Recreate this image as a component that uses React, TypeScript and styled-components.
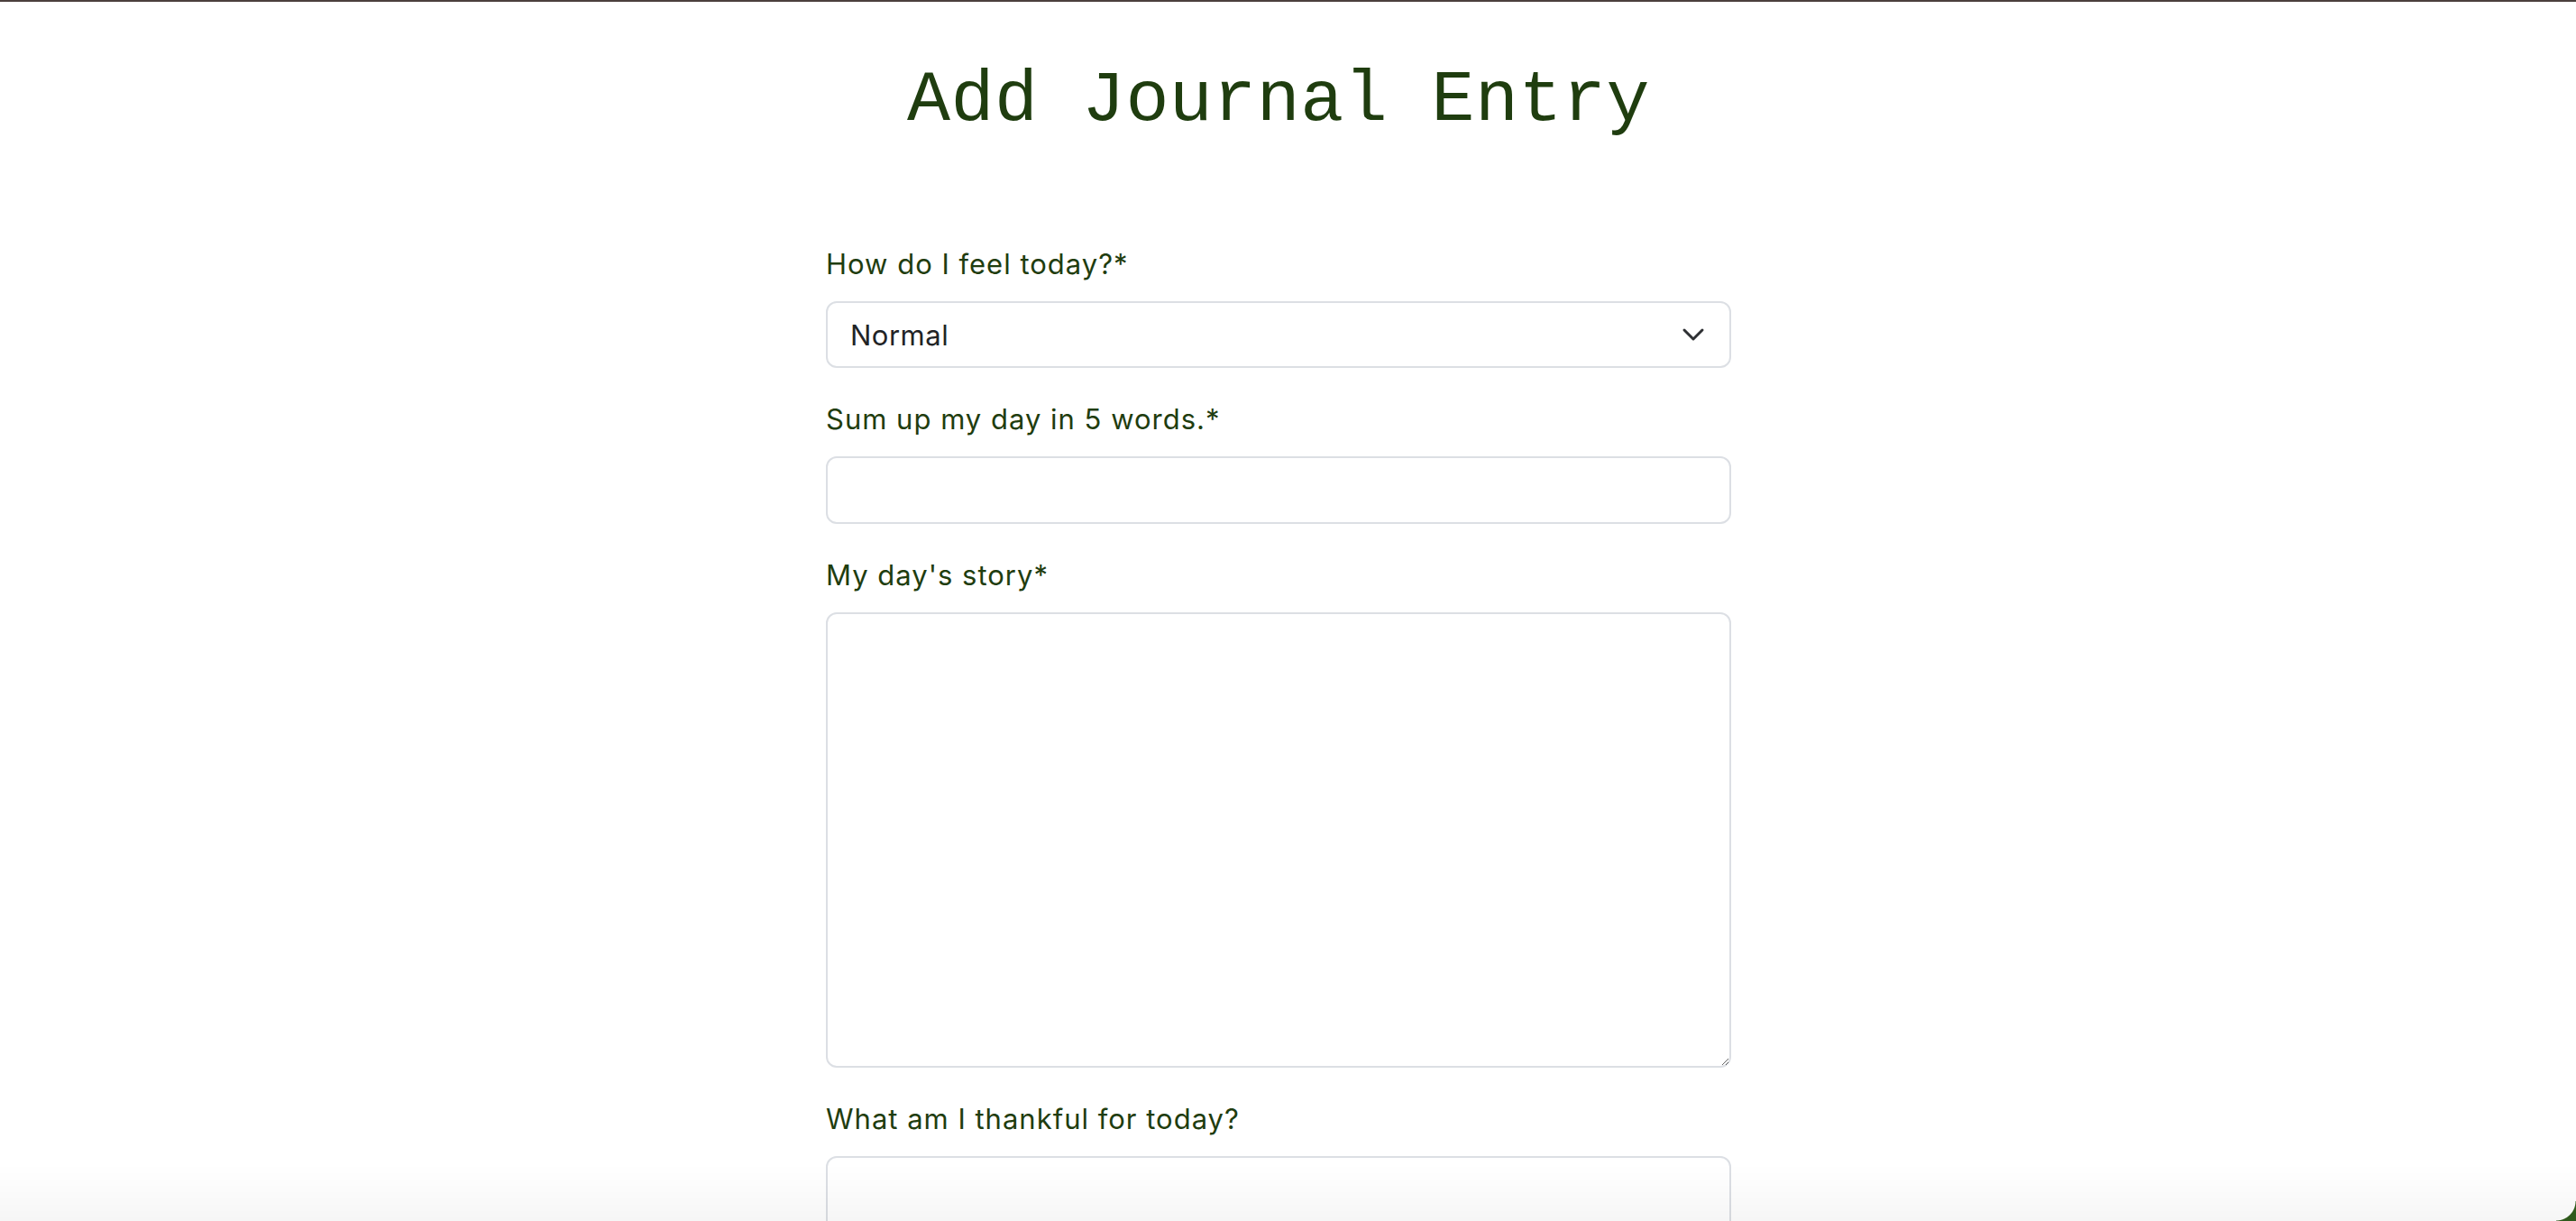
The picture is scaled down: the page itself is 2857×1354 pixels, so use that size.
import styled, { createGlobalStyle } from 'styled-components'
import { ChevronDown } from 'lucide-react'
import { ChangeEvent, useState } from 'react'

const GlobalStyle = createGlobalStyle`
  html, body {
    margin: 0;
    background: #ffffff;
  }
  * {
    box-sizing: border-box;
  }
`

const Page = styled.div`
  display: flex;
  flex-direction: column;
  align-items: center;
  min-height: 100vh;
  padding-right: 21px;
  border-top: 2px solid #4b403d;
`

const Title = styled.h1`
  margin: 62px 0 0;
  font-family: 'Liberation Mono', 'Courier New', monospace;
  font-size: 80px;
  font-weight: 400;
  line-height: 96px;
  letter-spacing: 0.45px;
  color: #1f3d0f;
`

const Form = styled.form`
  display: flex;
  flex-direction: column;
  gap: 38px;
  width: 1004px;
  margin-top: 114px;
  padding-bottom: 80px;
`

const Field = styled.div`
  display: flex;
  flex-direction: column;
  gap: 22px;
`

const Label = styled.label`
  font-family: Inter, 'Noto Sans', sans-serif;
  font-size: 31px;
  line-height: 38px;
  letter-spacing: 1px;
  color: #1f3d0f;
`

const controlBase = `
  width: 100%;
  border: 2px solid #dcdfe4;
  border-radius: 12px;
  background: #ffffff;
  font-family: Inter, 'Noto Sans', sans-serif;
  font-size: 31px;
  letter-spacing: 0.5px;
  color: #222426;
  outline: none;
`

const SelectWrap = styled.div`
  position: relative;
`

const Select = styled.select`
  ${controlBase}
  height: 74px;
  padding: 0 60px 0 25px;
  appearance: none;
`

const Chevron = styled(ChevronDown)`
  position: absolute;
  top: 50%;
  right: 22px;
  transform: translateY(-50%);
  color: #2e3033;
  pointer-events: none;
`

const TextInput = styled.input`
  ${controlBase}
  height: 75px;
  padding: 0 26px;
`

const TextArea = styled.textarea<{ $rows: number }>`
  ${controlBase}
  height: ${(p) => p.$rows}px;
  padding: 20px 26px;
  resize: vertical;
`

const BottomShade = styled.div`
  position: fixed;
  left: 0;
  right: 0;
  bottom: 0;
  height: 64px;
  background: linear-gradient(to bottom, rgba(0, 0, 0, 0), rgba(0, 0, 0, 0.035));
  pointer-events: none;
`

const WindowCorner = styled.div`
  position: fixed;
  right: 0;
  bottom: 0;
  width: 22px;
  height: 22px;
  background: radial-gradient(circle at top left, transparent 21px, #2f5a1c 22px);
  pointer-events: none;
`

const moods = ['Great', 'Good', 'Normal', 'Bad', 'Awful']

export default function App() {
  const [mood, setMood] = useState('Normal')
  const [summary, setSummary] = useState('')
  const [story, setStory] = useState('')
  const [thanks, setThanks] = useState('')

  return (
    <>
      <GlobalStyle />
      <Page>
        <Title>Add Journal Entry</Title>
        <Form onSubmit={(e) => e.preventDefault()}>
          <Field>
            <Label htmlFor="mood">How do I feel today?*</Label>
            <SelectWrap>
              <Select
                id="mood"
                value={mood}
                onChange={(e: ChangeEvent<HTMLSelectElement>) => setMood(e.target.value)}
              >
                {moods.map((m) => (
                  <option key={m} value={m}>
                    {m}
                  </option>
                ))}
              </Select>
              <Chevron size={40} strokeWidth={1.8} />
            </SelectWrap>
          </Field>
          <Field>
            <Label htmlFor="summary">Sum up my day in 5 words.*</Label>
            <TextInput
              id="summary"
              type="text"
              value={summary}
              onChange={(e) => setSummary(e.target.value)}
            />
          </Field>
          <Field>
            <Label htmlFor="story">My day's story*</Label>
            <TextArea
              id="story"
              $rows={505}
              value={story}
              onChange={(e) => setStory(e.target.value)}
            />
          </Field>
          <Field>
            <Label htmlFor="thanks">What am I thankful for today?</Label>
            <TextArea
              id="thanks"
              $rows={200}
              value={thanks}
              onChange={(e) => setThanks(e.target.value)}
            />
          </Field>
        </Form>
      </Page>
      <BottomShade />
      <WindowCorner />
    </>
  )
}
